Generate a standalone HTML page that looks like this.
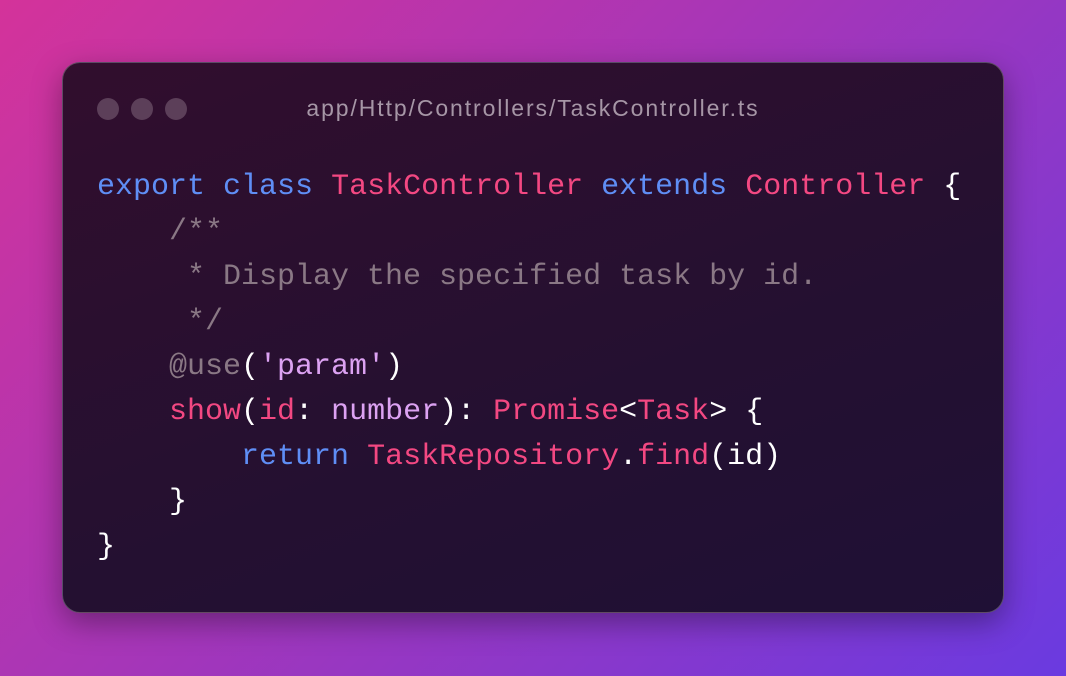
<!DOCTYPE html>
<html><head><meta charset="utf-8"><style>
html,body{margin:0;padding:0;width:1066px;height:676px;overflow:hidden}
body{background:linear-gradient(135deg,#d4339a 0%,#a636b8 45%,#6a3ae0 100%)}
.card{position:absolute;left:62px;top:62px;width:940px;height:549px;border-radius:18px;border:1px solid rgba(255,255,255,0.25);background:linear-gradient(160deg,#310e2d 0%,#241031 60%,#1f1035 100%);box-shadow:0 10px 30px rgba(0,0,0,0.35)}
.dot{position:absolute;top:35px;width:22px;height:22px;border-radius:50%;background:#5c3f59}
.title{position:absolute;left:0;right:0;top:32px;text-align:center;font:23px "Liberation Sans",sans-serif;letter-spacing:1.9px;color:#a696a6}
pre{position:absolute;left:34px;top:102px;margin:0;font:30px/45px "Liberation Mono",monospace;color:#fff}
.k{color:#5f8ef5}.p{color:#f34882}.c{color:#8a7885}.v{color:#dca2f2}
</style></head><body>
<div class="card">
<div class="dot" style="left:34px"></div><div class="dot" style="left:68px"></div><div class="dot" style="left:102px"></div>
<div class="title">app/Http/Controllers/TaskController.ts</div>
<pre><span class="k">export</span> <span class="k">class</span> <span class="p">TaskController</span> <span class="k">extends</span> <span class="p">Controller</span> {
    <span class="c">/**</span>
<span class="c">     * Display the specified task by id.</span>
<span class="c">     */</span>
    <span class="c">@use</span>(<span class="v">'param'</span>)
    <span class="p">show</span>(<span class="p">id</span>: <span class="v">number</span>): <span class="p">Promise</span>&lt;<span class="p">Task</span>&gt; {
        <span class="k">return</span> <span class="p">TaskRepository</span>.<span class="p">find</span>(id)
    }
}</pre>
</div>
</body></html>
